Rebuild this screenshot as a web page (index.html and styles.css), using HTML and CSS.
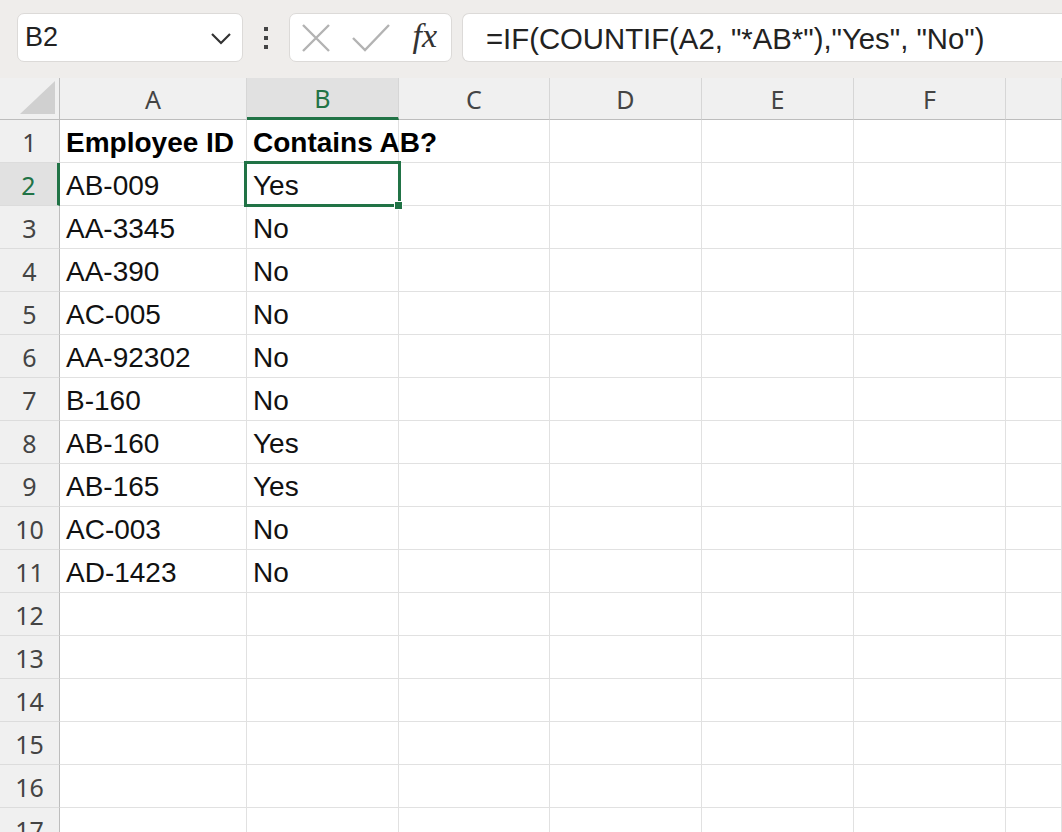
FILE: index.html
```html
<!DOCTYPE html>
<html>
<head lang="en">
    <meta charset="UTF-8">
    <title>Sheet</title>
    <link rel="stylesheet" href="styles.css">
</head>
<body>
    <div id="toolbar">
        <div class="namebox">
            <span>B2</span>
            <svg width="22" height="14" viewBox="0 0 22 14"><path d="M2 2 L11 11 L20 2" fill="none" stroke="#333" stroke-width="2.2"/></svg>
        </div>
        <div class="dots"><i></i><i></i><i></i></div>
        <div class="fxbtns">
            <svg width="28" height="28" viewBox="0 0 28 28"><path d="M1 1 L27 27 M27 1 L1 27" stroke="#b3b3b3" stroke-width="2.4"/></svg>
            <svg width="38" height="28" viewBox="0 0 38 28"><path d="M1 14 L13 26 L37 1" fill="none" stroke="#b3b3b3" stroke-width="2.4"/></svg>
            <span class="fx">fx</span>
        </div>
        <div class="formula">=IF(COUNTIF(A2, "*AB*"),"Yes", "No")</div>
    </div>
    <div id="sheet">
        <div class="row head">
            <div class="corner"><b></b></div>
            <div>A</div><div class="sel">B</div><div>C</div><div>D</div><div>E</div><div>F</div><div></div>
        </div>
        <div class="row bold"><div class="num">1</div><div>Employee ID</div><div>Contains AB?</div><div></div><div></div><div></div><div></div><div></div></div>
        <div class="row"><div class="num sel">2</div><div>AB-009</div><div class="active">Yes<span class="frame"></span><span class="handle"></span></div><div></div><div></div><div></div><div></div><div></div></div>
        <div class="row"><div class="num">3</div><div>AA-3345</div><div>No</div><div></div><div></div><div></div><div></div><div></div></div>
        <div class="row"><div class="num">4</div><div>AA-390</div><div>No</div><div></div><div></div><div></div><div></div><div></div></div>
        <div class="row"><div class="num">5</div><div>AC-005</div><div>No</div><div></div><div></div><div></div><div></div><div></div></div>
        <div class="row"><div class="num">6</div><div>AA-92302</div><div>No</div><div></div><div></div><div></div><div></div><div></div></div>
        <div class="row"><div class="num">7</div><div>B-160</div><div>No</div><div></div><div></div><div></div><div></div><div></div></div>
        <div class="row"><div class="num">8</div><div>AB-160</div><div>Yes</div><div></div><div></div><div></div><div></div><div></div></div>
        <div class="row"><div class="num">9</div><div>AB-165</div><div>Yes</div><div></div><div></div><div></div><div></div><div></div></div>
        <div class="row"><div class="num">10</div><div>AC-003</div><div>No</div><div></div><div></div><div></div><div></div><div></div></div>
        <div class="row"><div class="num">11</div><div>AD-1423</div><div>No</div><div></div><div></div><div></div><div></div><div></div></div>
        <div class="row"><div class="num">12</div><div></div><div></div><div></div><div></div><div></div><div></div><div></div></div>
        <div class="row"><div class="num">13</div><div></div><div></div><div></div><div></div><div></div><div></div><div></div></div>
        <div class="row"><div class="num">14</div><div></div><div></div><div></div><div></div><div></div><div></div><div></div></div>
        <div class="row"><div class="num">15</div><div></div><div></div><div></div><div></div><div></div><div></div><div></div></div>
        <div class="row"><div class="num">16</div><div></div><div></div><div></div><div></div><div></div><div></div><div></div></div>
        <div class="row"><div class="num">17</div><div></div><div></div><div></div><div></div><div></div><div></div><div></div></div>
    </div>
</body>
</html>
```

FILE: styles.css
```css
*{
    margin: 0;
    padding: 0;
    box-sizing: border-box;
}
html,body{
    width: 1062px;
    height: 832px;
    overflow: hidden;
    background: #ffffff;
    font-family: "Liberation Sans", Arial, sans-serif;
}
#toolbar{
    height: 78px;
    background: #efedeb;
    display: flex;
    align-items: flex-start;
    padding: 13px 0 0 17px;
}
.namebox,.fxbtns,.formula{
    height: 49px;
    background: #ffffff;
    border: 1px solid #dcdad8;
    border-radius: 7px;
    display: flex;
    align-items: center;
}
.namebox{
    width: 226px;
    padding: 0 10px 0 7px;
    justify-content: space-between;
    font-size: 27px;
    color: #222;
}
.namebox svg{
    margin-top: 2px;
}
.dots{
    width: 46px;
    height: 49px;
    display: flex;
    flex-direction: column;
    align-items: center;
    justify-content: center;
    gap: 5px;
}
.dots i{
    display: block;
    width: 4px;
    height: 4px;
    background: #444;
}
.fxbtns{
    width: 163px;
    padding: 0 14px 0 12px;
    justify-content: space-between;
}
.fx{
    font-family: "Liberation Serif", "Times New Roman", serif;
    font-style: italic;
    font-size: 34px;
    color: #333;
    margin-top: -4px;
}
.formula{
    flex: 1;
    margin-left: 10px;
    border-right: 0;
    border-radius: 7px 0 0 7px;
    padding: 3px 0 0 23px;
    font-size: 29.3px;
    color: #222;
}
#sheet{
    height: 754px;
    overflow: hidden;
}
.row{
    display: grid;
    grid-template-columns: 60px 187px 152px 151px 152px 152px 152px 1fr;
    height: 43px;
}
.row > div{
    border-right: 1px solid #e1e1e1;
    border-bottom: 1px solid #e1e1e1;
    display: flex;
    align-items: center;
    padding: 3px 0 0 6px;
    font-size: 28px;
    color: #111;
    white-space: nowrap;
}
.bold > div{
    font-weight: bold;
    color: #000;
}
.row.head{
    height: 42px;
    background: #f0f0f0;
}
.head > div{
    justify-content: center;
    padding: 0;
    font-family: "Noto Sans", "Open Sans", sans-serif;
    font-size: 25px;
    color: #444;
    border-right-color: #d6d6d6;
    border-bottom-color: #bdbdbd;
}
.head .sel{
    background: #e1e1e1;
    color: #217346;
    border-bottom: 3px solid #217346;
}
.corner{
    position: relative;
    border-right-color: #bdbdbd !important;
}
.corner b{
    position: absolute;
    right: 4px;
    bottom: 5px;
    width: 0;
    height: 0;
    border-left: 35px solid transparent;
    border-bottom: 33px solid #d0d0d0;
}
.row > .num{
    background: #f0f0f0;
    justify-content: center;
    padding: 2px 0 0 0;
    font-family: "Noto Sans", "Open Sans", sans-serif;
    font-size: 25px;
    font-weight: normal;
    color: #444;
    border-right-color: #bdbdbd;
    border-bottom-color: #dcdcdc;
}
.row > .num.sel{
    background: #e1e1e1;
    color: #217346;
    border-right: 3px solid #217346;
}
.active{
    position: relative;
}
.frame{
    position: absolute;
    left: -3px;
    top: -2px;
    right: -3px;
    bottom: -2px;
    border: 3px solid #217346;
}
.handle{
    position: absolute;
    right: -5px;
    bottom: -5px;
    width: 9px;
    height: 9px;
    background: #217346;
    border: 1px solid #ffffff;
}
```
